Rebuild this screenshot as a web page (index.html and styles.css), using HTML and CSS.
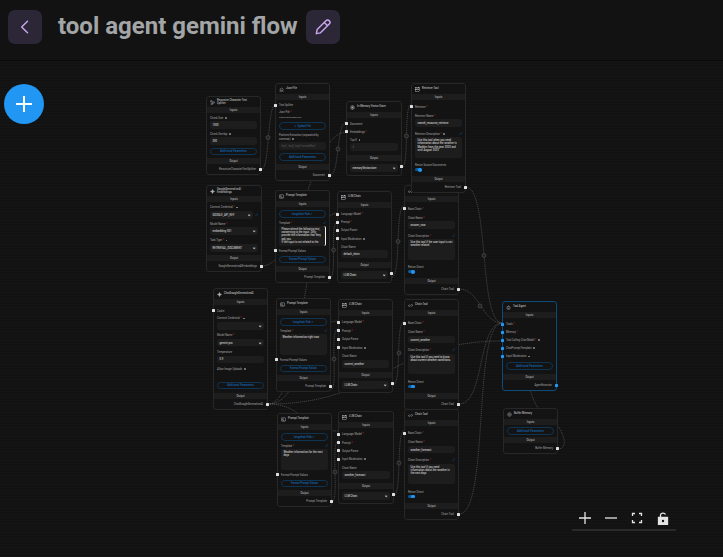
FILE: index.html
```html
<!DOCTYPE html>
<html lang="en">
<head>
  <meta charset="UTF-8">
  <meta name="viewport" content="width=device-width, initial-scale=1.0">
  <title>tool agent gemini flow</title>
  <link rel="stylesheet" href="styles.css">
</head>
<body>

  <svg class="defs" width="0" height="0">
    <symbol id="i-split" viewBox="0 0 10 10"><circle cx="2.5" cy="2.5" r="1.6"/><circle cx="7.5" cy="5" r="1.6"/><circle cx="3.5" cy="8" r="1.6"/><path d="M3.5 3.5 6 4.5M6 6 4.5 7"/></symbol>
    <symbol id="i-file" viewBox="0 0 10 10"><path d="M1 8.5h8M2.5 6.5C1.5 4 3 3 4 3 4.500 1.500 7 1.500 7.500 3.500 9 4 8.500 6.500 7.500 6.500z"/></symbol>
    <symbol id="i-store" viewBox="0 0 10 10"><circle cx="5" cy="5" r="3.800"/><path d="M2 3.500l6 3M2 6.500l6-3M5 1.500v7"/></symbol>
    <symbol id="i-tool" viewBox="0 0 10 10"><rect x="1" y="1.500" width="3" height="3"/><rect x="6" y="1.500" width="3" height="3"/><rect x="1" y="5.500" width="8" height="3"/></symbol>
    <symbol id="i-spark" viewBox="0 0 10 10"><path class="solid" d="M5 .8 6.200 3.800 9.200 5 6.200 6.200 5 9.200 3.800 6.200 .8 5 3.800 3.800z"/></symbol>
    <symbol id="i-prompt" viewBox="0 0 10 10"><rect x="1" y="1.500" width="8" height="7" rx=".8"/><path d="M3 3.500h1.500v1.500H3zM3 7h4"/></symbol>
    <symbol id="i-link" viewBox="0 0 10 10"><path d="M1 5.500C1 3.500 3 3.500 4 4.500L6 6C7 7 9 6.500 9 4.500S7 2.500 6 3.500M4 6.500C3 7.500 1 7 1 5.500"/></symbol>
    <symbol id="i-agent" viewBox="0 0 10 10"><rect x="2" y="3" width="6" height="5.500" rx="1"/><path d="M5 1v2M3.500 5h.6M6 5h.6M3.500 7h3"/></symbol>
    <symbol id="i-memory" viewBox="0 0 10 10"><circle cx="5" cy="5" r="3.600"/><circle cx="5" cy="5" r="1.300"/></symbol>
    <symbol id="i-expand" viewBox="0 0 10 10"><path d="M2 8 8 2M5 2h3v3M2 5v3h3"/></symbol>
  </svg>

  <header class="topbar">
    <button class="square-btn back">
      <svg viewBox="0 0 24 24"><path d="M15 5 8 12l7 7"/></svg>
    </button>
    <h1 class="flow-title">tool agent gemini flow</h1>
    <button class="square-btn">
      <svg viewBox="0 0 24 24"><path d="M5 15 15.500 4.500a2.500 2.500 0 0 1 4 4L9 19l-5 1zM13.500 6.500l4 4"/></svg>
    </button>
  </header>

  <main class="canvas">
    <div class="viewport">

      <svg class="edges" width="723" height="557" viewBox="0 0 723 557">
        <path d="M261 170C270 170 267 105 275.500 105"/>
        <path d="M329.500 176C340 176 336 122 346.500 122"/>
        <path d="M261.500 266C300 266 310 132 346.500 132"/>
        <path d="M401.500 168C410 168 403 104 411.500 104"/>
        <path d="M329.500 278C338 278 329 222 337.500 222"/>
        <path d="M268 404C305 404 300 213 337.500 213"/>
        <path d="M268 404C305 404 300 321 338 321"/>
        <path d="M268 404C305 404 300 431 338.500 431"/>
        <path d="M268 404C380 404 390 341 502.500 341"/>
        <path d="M330.500 390C339 390 329 329 338 329"/>
        <path d="M331.500 502C340 502 330 441 338.500 441"/>
        <path d="M392 277C401 277 395 206 404 206"/>
        <path d="M393 385C402 385 395 321 404.500 321"/>
        <path d="M393.500 496C402 496 396 430 404.500 430"/>
        <path d="M465.500 187C490 187 478 323 502.500 323"/>
        <path d="M459 289C480 289 482 323 502.500 323"/>
        <path d="M459 404C485 404 477 323 502.500 323"/>
        <path d="M459 514C490 514 472 323 502.500 323"/>
        <path d="M558 449C570 449 565 425 540 410 530 400 530 380 520 365 512 345 510 332 502.500 332"/>
        <g class="edge-marks">
          <circle cx="268" cy="137.500" r="2"/><circle cx="338" cy="149" r="2"/><circle cx="406.500" cy="136" r="2"/>
          <circle cx="333.500" cy="250" r="2"/><circle cx="398" cy="241.500" r="2"/><circle cx="399" cy="353" r="2"/>
          <circle cx="399" cy="463" r="2"/><circle cx="334" cy="359" r="2"/><circle cx="335" cy="472" r="2"/>
          <circle cx="484" cy="255.500" r="2"/><circle cx="480" cy="306" r="2"/>
        </g>
      </svg>

      <!-- first column -->
      <section class="node n-splitter">
        <div class="head"><svg class="ic"><use href="#i-split"/></svg><span>Recursive Character Text Splitter</span></div>
        <div class="bar">Inputs</div>
        <div class="body">
          <div class="group"><label>Chunk Size <i class="info"></i></label><div class="field">1000</div></div>
          <div class="group"><label>Chunk Overlap <i class="info"></i></label><div class="field">200</div></div>
          <button class="outline">Additional Parameters</button>
        </div>
        <div class="bar">Output</div>
        <div class="out">RecursiveCharacterTextSplitter<b class="port"></b></div>
      </section>

      <section class="node n-embed">
        <div class="head"><svg class="ic"><use href="#i-spark"/></svg><span>GoogleGenerativeAI Embeddings</span></div>
        <div class="bar">Inputs</div>
        <div class="body">
          <div class="group"><label>Connect Credential <em>*</em> <i class="info"></i></label><div class="field select short">GOOGLE_API_KEY<svg class="ic edit"><use href="#i-expand"/></svg></div></div>
          <div class="group"><label>Model Name <em>*</em></label><div class="field select">embedding-001</div></div>
          <div class="group"><label>Task Type <em>*</em> <i class="info"></i></label><div class="field select">RETRIEVAL_DOCUMENT</div></div>
        </div>
        <div class="bar">Output</div>
        <div class="out">GoogleGenerativeAIEmbeddings<b class="port"></b></div>
      </section>

      <section class="node n-gemini">
        <div class="head"><svg class="ic"><use href="#i-spark"/></svg><span>ChatGoogleGenerativeAI</span></div>
        <div class="bar">Inputs</div>
        <div class="body">
          <div class="row"><b class="port left"></b>Cache</div>
          <div class="group"><label>Connect Credential <em>*</em> <i class="info"></i></label><div class="field select">&nbsp;</div></div>
          <div class="group"><label>Model Name <em>*</em></label><div class="field select">gemini-pro</div></div>
          <div class="group"><label>Temperature</label><div class="field">0.9</div></div>
          <div class="group tall"><label>Allow Image Uploads <i class="info"></i></label></div>
          <button class="outline">Additional Parameters</button>
        </div>
        <div class="bar">Output</div>
        <div class="out">ChatGoogleGenerativeAI<b class="port"></b></div>
      </section>

      <!-- second column -->
      <section class="node n-json">
        <div class="head"><svg class="ic"><use href="#i-file"/></svg><span>Json File</span></div>
        <div class="bar">Inputs</div>
        <div class="body">
          <div class="row"><b class="port left"></b>Text Splitter</div>
          <div class="group"><label>Json File <em>*</em></label><small>cheat-sheets-data.json</small></div>
          <button class="outline">&#8682; Upload File</button>
          <div class="group"><label>Pointers Extraction (separated by commas) <i class="info"></i></label><div class="field dim">key1, key2, key3.nestedKey1</div></div>
          <button class="outline">Additional Parameters</button>
        </div>
        <div class="bar">Output</div>
        <div class="out">Document<b class="port"></b></div>
      </section>

      <section class="node n-prompt1">
        <div class="head"><svg class="ic"><use href="#i-prompt"/></svg><span>Prompt Template</span></div>
        <div class="bar">Inputs</div>
        <div class="body">
          <button class="outline">Langchain Hub &#8599;</button>
          <div class="group"><label>Template <em>*</em><svg class="ic edit"><use href="#i-expand"/></svg></label>
            <div class="field area scroll">Please attend the following text, concerning to the input. Only provide the information that they ask you.<br>If the input is not related to the</div></div>
          <div class="row"><b class="port left"></b>Format Prompt Values</div>
          <button class="outline">Format Prompt Values</button>
        </div>
        <div class="bar">Output</div>
        <div class="out">Prompt Template<b class="port"></b></div>
      </section>

      <section class="node n-prompt2">
        <div class="head"><svg class="ic"><use href="#i-prompt"/></svg><span>Prompt Template</span></div>
        <div class="bar">Inputs</div>
        <div class="body">
          <button class="outline">Langchain Hub &#8599;</button>
          <div class="group"><label>Template <em>*</em><svg class="ic edit"><use href="#i-expand"/></svg></label>
            <div class="field area">Weather information right now</div></div>
          <div class="row"><b class="port left"></b>Format Prompt Values</div>
          <button class="outline">Format Prompt Values</button>
        </div>
        <div class="bar">Output</div>
        <div class="out">Prompt Template<b class="port"></b></div>
      </section>

      <section class="node n-prompt3">
        <div class="head"><svg class="ic"><use href="#i-prompt"/></svg><span>Prompt Template</span></div>
        <div class="bar">Inputs</div>
        <div class="body">
          <button class="outline">Langchain Hub &#8599;</button>
          <div class="group"><label>Template <em>*</em><svg class="ic edit"><use href="#i-expand"/></svg></label>
            <div class="field area">Weather information for the next days</div></div>
          <div class="row"><b class="port left"></b>Format Prompt Values</div>
          <button class="outline">Format Prompt Values</button>
        </div>
        <div class="bar">Output</div>
        <div class="out">Prompt Template<b class="port"></b></div>
      </section>

      <!-- third column -->
      <section class="node n-store">
        <div class="head"><svg class="ic"><use href="#i-store"/></svg><span>In-Memory Vector Store</span></div>
        <div class="bar">Inputs</div>
        <div class="body">
          <div class="row"><b class="port left"></b>Document</div>
          <div class="row"><b class="port left"></b>Embeddings <em>*</em></div>
          <div class="group"><label>Top K <i class="info"></i></label><div class="field dim">4</div></div>
        </div>
        <div class="bar">Output</div>
        <div class="out pick"><div class="field select">memoryVectorstore</div><b class="port"></b></div>
      </section>

      <section class="node n-llm1">
        <div class="head"><svg class="ic"><use href="#i-tool"/></svg><span>LLM Chain</span></div>
        <div class="bar">Inputs</div>
        <div class="body">
          <div class="row"><b class="port left"></b>Language Model <em>*</em></div>
          <div class="row"><b class="port left"></b>Prompt <em>*</em></div>
          <div class="row"><b class="port left"></b>Output Parser</div>
          <div class="row"><b class="port left"></b>Input Moderation <i class="info"></i></div>
          <div class="group"><label>Chain Name</label><div class="field">default_chain</div></div>
        </div>
        <div class="bar">Output</div>
        <div class="out pick"><div class="field select">LLM Chain</div><b class="port"></b></div>
      </section>

      <section class="node n-llm2">
        <div class="head"><svg class="ic"><use href="#i-tool"/></svg><span>LLM Chain</span></div>
        <div class="bar">Inputs</div>
        <div class="body">
          <div class="row"><b class="port left"></b>Language Model <em>*</em></div>
          <div class="row"><b class="port left"></b>Prompt <em>*</em></div>
          <div class="row"><b class="port left"></b>Output Parser</div>
          <div class="row"><b class="port left"></b>Input Moderation <i class="info"></i></div>
          <div class="group"><label>Chain Name</label><div class="field">current_weather</div></div>
        </div>
        <div class="bar">Output</div>
        <div class="out pick"><div class="field select">LLM Chain</div><b class="port"></b></div>
      </section>

      <section class="node n-llm3">
        <div class="head"><svg class="ic"><use href="#i-tool"/></svg><span>LLM Chain</span></div>
        <div class="bar">Inputs</div>
        <div class="body">
          <div class="row"><b class="port left"></b>Language Model <em>*</em></div>
          <div class="row"><b class="port left"></b>Prompt <em>*</em></div>
          <div class="row"><b class="port left"></b>Output Parser</div>
          <div class="row"><b class="port left"></b>Input Moderation <i class="info"></i></div>
          <div class="group"><label>Chain Name</label><div class="field">weather_forecast</div></div>
        </div>
        <div class="bar">Output</div>
        <div class="out pick"><div class="field select">LLM Chain</div><b class="port"></b></div>
      </section>

      <!-- fourth column -->
      <section class="node n-chain1">
        <div class="head"><svg class="ic"><use href="#i-link"/></svg><span>Chain Tool</span></div>
        <div class="bar">Inputs</div>
        <div class="body">
          <div class="row"><b class="port left"></b>Base Chain <em>*</em></div>
          <div class="group"><label>Chain Name <em>*</em></label><div class="field">answer_now</div></div>
          <div class="group"><label>Chain Description <em>*</em><svg class="ic edit"><use href="#i-expand"/></svg></label><div class="field area">Use this tool if the user input is not weather related</div></div>
          <div class="group"><label>Return Direct</label><i class="toggle"></i></div>
        </div>
        <div class="bar">Output</div>
        <div class="out">Chain Tool<b class="port"></b></div>
      </section>

      <section class="node n-retriever">
        <div class="head"><svg class="ic"><use href="#i-tool"/></svg><span>Retriever Tool</span></div>
        <div class="bar">Inputs</div>
        <div class="body">
          <div class="row"><b class="port left"></b>Retriever <em>*</em></div>
          <div class="group"><label>Retriever Name <em>*</em></label><div class="field">search_resource_retriever</div></div>
          <div class="group"><label>Retriever Description <em>*</em> <i class="info"></i><svg class="ic edit"><use href="#i-expand"/></svg></label><div class="field area">Use this tool when you need information about the weather in Madden from the year 2022 and until August 2023</div></div>
          <div class="group"><label>Return Source Documents</label><i class="toggle"></i></div>
        </div>
        <div class="bar">Output</div>
        <div class="out">Retriever Tool<b class="port"></b></div>
      </section>

      <section class="node n-chain2">
        <div class="head"><svg class="ic"><use href="#i-link"/></svg><span>Chain Tool</span></div>
        <div class="bar">Inputs</div>
        <div class="body">
          <div class="row"><b class="port left"></b>Base Chain <em>*</em></div>
          <div class="group"><label>Chain Name <em>*</em></label><div class="field">current_weather</div></div>
          <div class="group"><label>Chain Description <em>*</em><svg class="ic edit"><use href="#i-expand"/></svg></label><div class="field area">Use this tool if you need to know about current weather conditions.</div></div>
          <div class="group"><label>Return Direct</label><i class="toggle"></i></div>
        </div>
        <div class="bar">Output</div>
        <div class="out">Chain Tool<b class="port"></b></div>
      </section>

      <section class="node n-chain3">
        <div class="head"><svg class="ic"><use href="#i-link"/></svg><span>Chain Tool</span></div>
        <div class="bar">Inputs</div>
        <div class="body">
          <div class="row"><b class="port left"></b>Base Chain <em>*</em></div>
          <div class="group"><label>Chain Name <em>*</em></label><div class="field">weather_forecast</div></div>
          <div class="group"><label>Chain Description <em>*</em><svg class="ic edit"><use href="#i-expand"/></svg></label><div class="field area">Use this tool if you need information about the weather in the next days</div></div>
          <div class="group"><label>Return Direct</label><i class="toggle"></i></div>
        </div>
        <div class="bar">Output</div>
        <div class="out">Chain Tool<b class="port"></b></div>
      </section>

      <!-- last column -->
      <section class="node n-agent selected">
        <div class="head"><svg class="ic"><use href="#i-agent"/></svg><span>Tool Agent</span></div>
        <div class="bar">Inputs</div>
        <div class="body">
          <div class="row"><b class="port left"></b>Tools <em>*</em></div>
          <div class="row"><b class="port left"></b>Memory <em>*</em></div>
          <div class="row"><b class="port left"></b>Tool Calling Chat Model <em>*</em> <i class="info"></i></div>
          <div class="row"><b class="port left"></b>ChatPromptTemplate <i class="info"></i></div>
          <div class="row"><b class="port left"></b>Input Moderation <i class="info"></i></div>
          <button class="outline">Additional Parameters</button>
        </div>
        <div class="bar">Output</div>
        <div class="out">AgentExecutor<b class="port"></b></div>
      </section>

      <section class="node n-buffer">
        <div class="head"><svg class="ic"><use href="#i-memory"/></svg><span>Buffer Memory</span></div>
        <div class="bar">Inputs</div>
        <div class="body">
          <button class="outline">Additional Parameters</button>
        </div>
        <div class="bar">Output</div>
        <div class="out">Buffer Memory<b class="port"></b></div>
      </section>

    </div>

    <button class="fab">
      <svg viewBox="0 0 24 24"><path d="M12 4v16M4 12h16"/></svg>
    </button>

    <div class="controls">
      <svg viewBox="0 0 14 14"><path d="M7 1v12M1 7h12"/></svg>
      <svg viewBox="0 0 14 14"><path d="M1 7h12"/></svg>
      <svg viewBox="0 0 14 14"><path d="M2.500 5V2.500H5M9 2.500h2.500V5M11.500 9v2.500H9M5 11.500H2.500V9"/></svg>
      <svg viewBox="0 0 14 14"><path class="solid" d="M2.500 6.500h9v7h-9z"/><path d="M4.500 6.500V4C4.500 1.800 8.500 1.300 9.500 3.500"/><circle class="hole" cx="7" cy="10" r="1.200"/></svg>
    </div>
  </main>

</body>
</html>
```

FILE: styles.css
```css
* {
  box-sizing: border-box;
}
html, body {
  height: 100%;
}
body {
  margin: 0;
  display: flex;
  flex-direction: column;
  overflow: hidden;
  background-color: #121212;
  font-family: Roboto, "Liberation Sans", sans-serif;
}
.defs {
  position: absolute;
}

/* top bar */
.topbar {
  height: 61px;
  flex: none;
  display: flex;
  align-items: flex-start;
  padding: 10px 8px 0;
  border-bottom: 1px solid #0b0b0b;
}
.square-btn {
  width: 34px;
  height: 34px;
  padding: 7px;
  border: none;
  border-radius: 7px;
  background-color: #2c2736;
}
.square-btn svg {
  display: block;
  width: 20px;
  height: 20px;
  fill: none;
  stroke: #c9a6f0;
  stroke-width: 1.7;
  stroke-linecap: round;
  stroke-linejoin: round;
}
.flow-title {
  margin: 0 8px 0 16px;
  width: 240px;
  font-size: 24px;
  line-height: 32px;
  font-weight: 700;
  color: #a3a5a7;
  white-space: nowrap;
}

/* canvas */
.canvas {
  position: relative;
  flex: 1;
  background-image: linear-gradient(#151515 1px, transparent 1px);
  background-size: 3px 3px;
}
.viewport {
  position: absolute;
  left: 0;
  top: -61px;
}
.edges {
  position: absolute;
  left: 0;
  top: 0;
  fill: none;
  stroke: #6e6e6e;
  stroke-width: .5;
  stroke-dasharray: 1.2 .8;
}
.edge-marks circle {
  fill: #242424;
  stroke: #5e5e5e;
  stroke-dasharray: none;
}

/* nodes */
.node {
  position: absolute;
  display: flex;
  flex-direction: column;
  background-color: #131313;
  border: 1px solid #272727;
  border-radius: 3px;
  color: #a8a8a8;
  font-size: 2.7px;
  line-height: 4px;
}
.node.selected {
  border-color: #0c4a78;
}
.head {
  flex: none;
  height: 10px;
  display: flex;
  align-items: center;
  gap: 2px;
  padding: 0 3px;
  color: #b4b4b4;
  font-weight: 500;
  line-height: 3.400px;
}
.head span {
  max-width: 38px;
}
.ic {
  flex: none;
  width: 5px;
  height: 5px;
  fill: none;
  stroke: #cfcfcf;
  stroke-width: .8;
}
.solid {
  fill: currentColor;
}
.bar {
  flex: none;
  height: 6px;
  line-height: 6px;
  text-align: center;
  background-color: #1d1d1d;
  font-weight: 500;
}
.body {
  flex: 1;
  display: flex;
  flex-direction: column;
  justify-content: space-evenly;
  padding: 0 3px;
}
.row {
  position: relative;
  height: 4px;
}
.group {
  display: flex;
  flex-direction: column;
  gap: 1.500px;
}
.group.tall {
  height: 11px;
}
.group label {
  position: relative;
  display: block;
}
.group small {
  display: block;
  font-size: 2.200px;
  line-height: 3px;
}
em {
  color: #d43232;
  font-style: normal;
}
.info {
  display: inline-block;
  width: 1.800px;
  height: 1.800px;
  margin-left: 1px;
  border-radius: 50%;
  background-color: #8a8a8a;
}
.edit {
  position: absolute;
  right: 0;
  top: 0;
  width: 3.500px;
  height: 3.500px;
  stroke: #1568b8;
}
.field {
  position: relative;
  min-height: 7.500px;
  padding: 1.800px 2.500px;
  background-color: #1d1d1d;
  border-radius: 2px;
  color: #c8c8c8;
  font-weight: 500;
  white-space: nowrap;
  overflow: hidden;
}
.field.dim {
  color: #505050;
}
.field.area {
  height: 20.500px;
  white-space: normal;
  line-height: 3.300px;
}
.field.scroll {
  height: 19.500px;
  border-right: 1px solid #f2f2f2;
}
.field.select::after {
  content: "";
  position: absolute;
  right: 2.500px;
  top: 3px;
  width: 1.400px;
  height: 1.400px;
  border-right: .5px solid #aaa;
  border-bottom: .5px solid #aaa;
  transform: rotate(45deg);
}
.field.short {
  overflow: visible;
  margin-right: 5px;
}
.field.short .edit {
  right: -5px;
  top: 2px;
}
.outline {
  display: block;
  width: 100%;
  height: 7.500px;
  padding: 0;
  background: none;
  border: 1px solid #0f3452;
  border-radius: 4px;
  color: #1468b4;
  font-family: inherit;
  font-size: 2.700px;
  font-weight: 500;
}
.toggle {
  position: relative;
  display: block;
  width: 7px;
  height: 2.800px;
  border-radius: 2px;
  background-color: #0c5a9e;
}
.toggle::after {
  content: "";
  position: absolute;
  right: 0;
  top: -.500px;
  width: 3.800px;
  height: 3.800px;
  border-radius: 50%;
  background-color: #2196f3;
}
.out {
  position: relative;
  flex: none;
  height: 10px;
  line-height: 10px;
  padding: 0 4px;
  text-align: right;
}
.out.pick {
  height: 14px;
  padding: 3px 3px 0;
  line-height: 4px;
  text-align: left;
}
.port {
  position: absolute;
  right: -2px;
  top: 4px;
  width: 3px;
  height: 3px;
  background-color: #e0e0e0;
  border-radius: .5px;
}
.port.left {
  right: auto;
  left: -5px;
  top: .5px;
}
.selected .port {
  background-color: #2196f3;
}

/* node places on the canvas */
.n-splitter  { left: 206px; top: 96px;  width: 55px; height: 79px; }
.n-embed     { left: 206px; top: 185px; width: 56px; height: 87px; }
.n-gemini    { left: 213px; top: 288px; width: 55px; height: 122px; }
.n-json      { left: 275px; top: 83px;  width: 55px; height: 98px; }
.n-prompt1   { left: 275px; top: 190px; width: 55px; height: 93px; }
.n-prompt2   { left: 276px; top: 298px; width: 55px; height: 94px; }
.n-prompt3   { left: 277px; top: 413px; width: 55px; height: 94px; }
.n-store     { left: 346px; top: 101px; width: 56px; height: 75px; }
.n-llm1      { left: 337px; top: 191px; width: 55px; height: 92px; }
.n-llm2      { left: 338px; top: 299px; width: 55px; height: 94px; }
.n-llm3      { left: 338px; top: 411px; width: 56px; height: 93px; }
.n-chain1    { left: 404px; top: 185px; width: 55px; height: 110px; }
.n-retriever { left: 411px; top: 83px;  width: 55px; height: 110px; }
.n-chain2    { left: 404px; top: 299px; width: 55px; height: 111px; }
.n-chain3    { left: 404px; top: 409px; width: 55px; height: 111px; }
.n-agent     { left: 502px; top: 301px; width: 55px; height: 90px; }
.n-buffer    { left: 503px; top: 408px; width: 55px; height: 46px; }

/* floating things */
.fab {
  position: absolute;
  left: 4px;
  top: 23px;
  width: 40px;
  height: 40px;
  padding: 8px;
  border: none;
  border-radius: 50%;
  background-color: #2196f3;
}
.fab svg {
  display: block;
  width: 24px;
  height: 24px;
  fill: none;
  stroke: #fff;
  stroke-width: 2;
}
.controls {
  position: absolute;
  left: 572px;
  top: 450px;
  width: 104px;
  height: 20px;
  padding: 0 6px 7px;
  display: flex;
  justify-content: space-between;
  border-bottom: 2px solid #2a2a2a;
}
.controls svg {
  width: 14px;
  height: 14px;
  fill: none;
  stroke: #e4e4e4;
  stroke-width: 1.300;
  color: #e4e4e4;
}
.controls .hole {
  fill: #121212;
  stroke: none;
}
```
